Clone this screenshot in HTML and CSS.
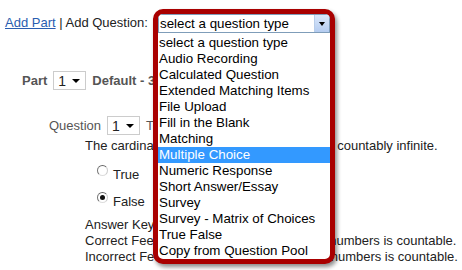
FILE: index.html
```html
<!DOCTYPE html>
<html>
<head>
<meta charset="utf-8">
<title>Add Question</title>
<link rel="stylesheet" href="styles.css">
</head>
<body>

<div class="toolbar"><a href="#">Add Part</a> | Add Question:</div>

<div class="part-row">
  <span class="bold">Part</span>
  <span class="mini-select">1<span class="caret"></span></span>
  <span class="bold">Default - 3 questions</span>
</div>

<div class="question-row">
  <span>Question</span>
  <span class="mini-select">1<span class="caret"></span></span>
  <span>True False</span>
</div>

<div class="question-body">
  <p class="prompt">The cardinality of the set of real numbers is countably infinite.</p>
  <div class="option"><span class="radio"></span><span class="option-text">True</span></div>
  <div class="option"><span class="radio checked"></span><span class="option-text">False</span></div>
  <div class="feedback">
    Answer Key: False<br>
    Correct Feedback: Only the set of rational numbers is countable.<br>
    Incorrect Feedback: No, the set of rational numbers is countable.
  </div>
</div>

<!-- highlighted dropdown, drawn over the page -->
<div class="callout">
  <div class="qselect">
    <span class="qselect-text">select a question type</span>
    <span class="qselect-btn"><span class="caret"></span></span>
  </div>
  <ul class="qlist">
    <li>select a question type</li>
    <li>Audio Recording</li>
    <li>Calculated Question</li>
    <li>Extended Matching Items</li>
    <li>File Upload</li>
    <li>Fill in the Blank</li>
    <li>Matching</li>
    <li class="active">Multiple Choice</li>
    <li>Numeric Response</li>
    <li>Short Answer/Essay</li>
    <li>Survey</li>
    <li>Survey - Matrix of Choices</li>
    <li>True False</li>
    <li>Copy from Question Pool</li>
  </ul>
</div>

</body>
</html>
```

FILE: styles.css
```css
body {
  margin: 0;
  font-family: "Liberation Sans", Arial, sans-serif;
  font-size: 13px;
  line-height: 16px;
  color: #222;
  background-color: white;
}

a {
  color: #2a5db0;
}

.bold {
  font-weight: bold;
}

.toolbar {
  padding: 15px 0 0 5px;
  height: 16px;
}

.part-row, .question-row {
  display: flex;
  align-items: center;
  gap: 6px;
  height: 19px;
  color: #555;
}

.part-row {
  margin-top: 40px;
  padding-left: 22px;
}

.question-row {
  margin-top: 26px;
  padding-left: 49px;
}

.mini-select {
  display: flex;
  align-items: center;
  justify-content: space-between;
  width: 33px;
  height: 19px;
  box-sizing: border-box;
  border: 1px solid #ccc;
  padding: 0 5px 0 4px;
  font-size: 14px;
  color: #222;
  font-weight: normal;
}

.caret {
  width: 0;
  height: 0;
  border-left: 4px solid transparent;
  border-right: 4px solid transparent;
  border-top: 4px solid #000;
}

.prompt {
  margin: 3px 0 0;
  padding-left: 85px;
}

.option {
  display: flex;
  align-items: flex-start;
  height: 27px;
  padding-left: 97px;
}

.radio {
  width: 11px;
  height: 11px;
  box-sizing: border-box;
  margin: 11px 5px 0 0;
  border-radius: 50%;
  border: 1px solid;
  border-color: #666 #ccc #ddd #777;
  background: #fff;
  position: relative;
}

.radio.checked::after {
  content: "";
  position: absolute;
  left: 2px;
  top: 2px;
  width: 5px;
  height: 5px;
  border-radius: 50%;
  background: #111;
}

.option-text {
  margin-top: 13px;
}

.feedback {
  margin-top: 9px;
  padding-left: 85px;
  white-space: nowrap;
}

/* the red callout with the open question type list */
.callout {
  position: absolute;
  left: 153px;
  top: 9px;
  width: 172px;
  height: 245px;
  border: 5px solid #a90000;
  border-radius: 10px;
  background: #fff;
  box-shadow: 2px 3px 4px rgba(0, 0, 0, 0.45);
  font-size: 13.33px;
  color: #000;
  overflow: hidden;
}

.qselect {
  display: flex;
  align-items: center;
  height: 19px;
  box-sizing: border-box;
  border: 1px solid #7f9db9;
}

.qselect-text {
  flex: 1;
  padding-left: 1px;
}

.qselect-btn {
  display: flex;
  align-items: center;
  justify-content: center;
  width: 14px;
  height: 17px;
  border-left: 1px solid #b8cdea;
  background: linear-gradient(#dbe8fb, #b4ccf0);
}

.qselect-btn .caret {
  border-left-width: 3.5px;
  border-right-width: 3.5px;
}

.qlist {
  list-style: none;
  margin: 2px 0 0;
  padding: 0;
}

.qlist li {
  height: 16px;
  line-height: 16px;
  padding-left: 1px;
  white-space: nowrap;
}

.qlist li.active {
  background: #3399ff;
  color: #fff;
}
```
